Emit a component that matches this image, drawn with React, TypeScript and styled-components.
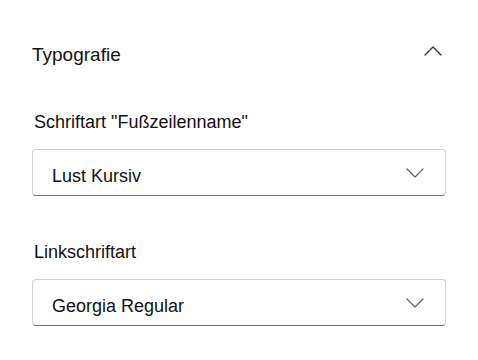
import React from "react";
import styled, { createGlobalStyle } from "styled-components";

const Global = createGlobalStyle`
  html, body { margin: 0; padding: 0; background: #ffffff; }
  body { font-family: "Liberation Sans", Arial, sans-serif; color: #1a1a1a; }
`;

const Panel = styled.div`
  padding: 43px 32px 0 32px;
  display: flex;
  flex-direction: column;
`;

const Header = styled.div`
  display: flex;
  align-items: center;
  justify-content: space-between;
  height: 24px;
  padding-right: 4px;
`;

const Title = styled.div`
  font-size: 19px;
  line-height: 24px;
  color: #111;
`;

const ChevronBox = styled.svg<{ $up?: boolean }>`
  display: block;
  width: 18px;
  height: 10px;
  margin-top: ${(p) => (p.$up ? "-8px" : "0")};
`;

const Field = styled.div<{ $gap: number }>`
  display: flex;
  flex-direction: column;
  margin-top: ${(p) => p.$gap}px;
`;

const Label = styled.div`
  font-size: 18px;
  line-height: 24px;
  color: #111;
  padding-left: 2px;
`;

const Select = styled.div`
  margin-top: 15px;
  height: 47px;
  box-sizing: border-box;
  border: 1px solid #d1d1d1;
  border-bottom-color: #707070;
  border-radius: 4px;
  display: flex;
  align-items: center;
  justify-content: space-between;
  padding: 0 21px 0 19px;
`;

const Value = styled.div`
  font-size: 18px;
  line-height: 24px;
  color: #111;
  margin-top: 6px;
`;

const Chevron = ({ up, color }: { up?: boolean; color: string }) => (
  <ChevronBox $up={up} viewBox="0 0 18 10">
    <polyline
      points={up ? "1,9 9,1 17,9" : "1,1 9,9 17,1"}
      fill="none"
      stroke={color}
      strokeWidth={1.3}
      strokeLinecap="round"
      strokeLinejoin="round"
    />
  </ChevronBox>
);

const fields = [
  { label: 'Schriftart "Fußzeilenname"', value: "Lust Kursiv", gap: 43 },
  { label: "Linkschriftart", value: "Georgia Regular", gap: 44 },
];

export default function App() {
  return (
    <>
      <Global />
      <Panel>
        <Header>
          <Title>Typografie</Title>
          <Chevron up color="#333" />
        </Header>
        {fields.map((f) => (
          <Field key={f.label} $gap={f.gap}>
            <Label>{f.label}</Label>
            <Select>
              <Value>{f.value}</Value>
              <Chevron color="#666" />
            </Select>
          </Field>
        ))}
      </Panel>
    </>
  );
}
